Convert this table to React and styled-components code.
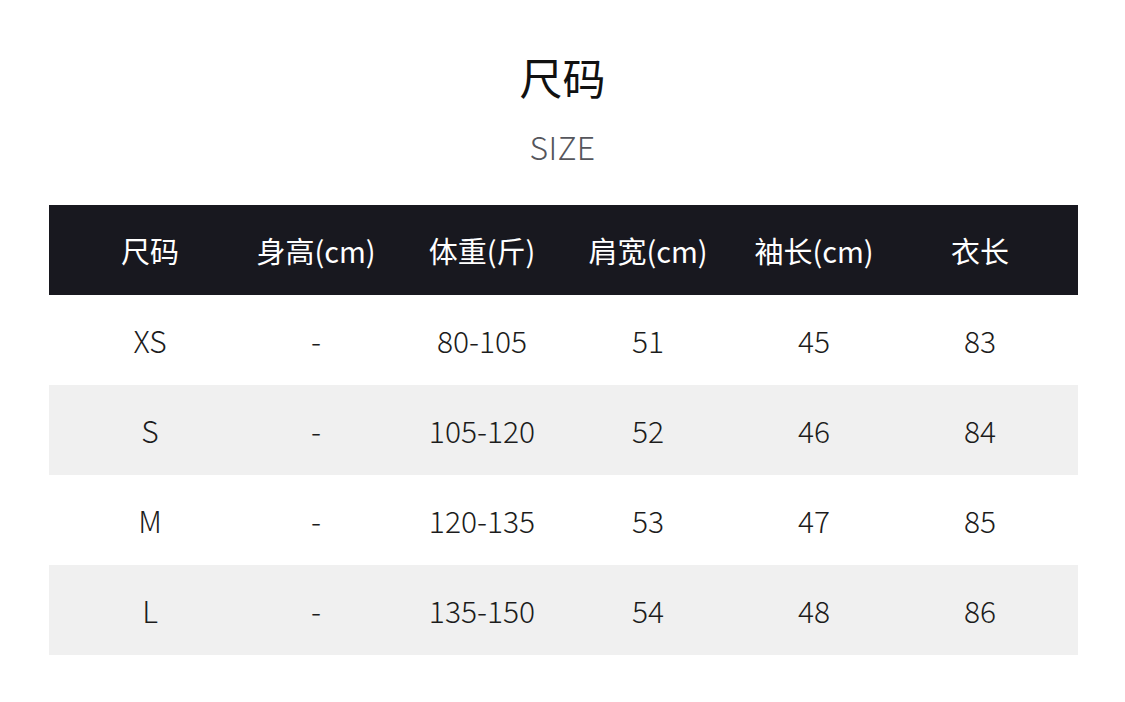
import React from "react";
import styled, { createGlobalStyle } from "styled-components";

const GlobalStyle = createGlobalStyle`
  body {
    margin: 0;
    background: #fff;
    font-family: "Noto Sans CJK SC", "Noto Sans", sans-serif;
  }
`;

const Page = styled.div`
  width: 1125px;
  height: 702px;
  display: flex;
  flex-direction: column;
  align-items: center;
  padding-top: 48px;
  box-sizing: border-box;
`;

const Title = styled.h1`
  margin: 0;
  font-size: 43px;
  line-height: 56px;
  font-weight: 400;
  color: #111;
`;

const Subtitle = styled.div`
  margin-top: 22px;
  font-size: 32px;
  line-height: 40px;
  font-weight: 300;
  color: #55565c;
  letter-spacing: 0.3px;
`;

const Table = styled.div`
  margin-top: 39px;
  width: 1029px;
  margin-left: 2px;
`;

const Row = styled.div`
  display: grid;
  grid-template-columns: repeat(6, 1fr);
  height: 90px;
  padding: 0 15px 0 18px;
  align-items: center;
  background: ${(p) => (p.$head ? "#18181f" : p.$shaded ? "#f0f0f0" : "#fff")};
  color: ${(p) => (p.$head ? "#fff" : "#1c1c1c")};
`;

const Cell = styled.div`
  text-align: center;
  font-size: ${(p) => (p.$head ? "29px" : "30px")};
  line-height: 38px;
  font-weight: ${(p) => (p.$head ? 400 : 300)};
`;

const headers = ["尺码", "身高(cm)", "体重(斤)", "肩宽(cm)", "袖长(cm)", "衣长"];
const rows = [
  ["XS", "-", "80-105", "51", "45", "83"],
  ["S", "-", "105-120", "52", "46", "84"],
  ["M", "-", "120-135", "53", "47", "85"],
  ["L", "-", "135-150", "54", "48", "86"],
];

const App = () => {
  return (
    <>
      <GlobalStyle />
      <Page>
        <Title>尺码</Title>
        <Subtitle>SIZE</Subtitle>
        <Table>
          <Row $head>
            {headers.map((h) => (
              <Cell key={h} $head>{h}</Cell>
            ))}
          </Row>
          {rows.map((r, i) => (
            <Row key={r[0]} $shaded={i % 2 === 1}>
              {r.map((c, j) => (
                <Cell key={j}>{c}</Cell>
              ))}
            </Row>
          ))}
        </Table>
      </Page>
    </>
  );
};

export default App;
